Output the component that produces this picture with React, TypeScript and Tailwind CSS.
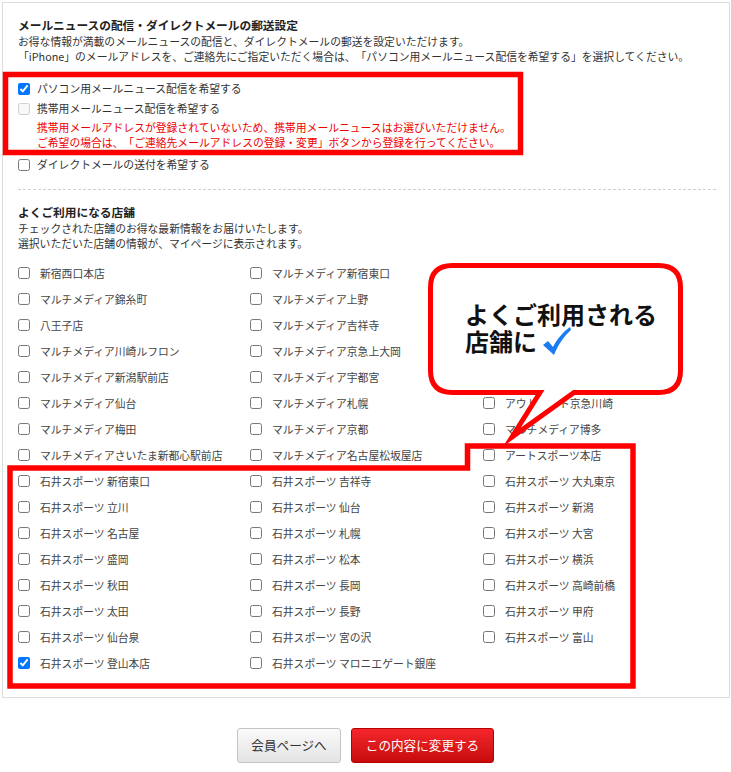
import type { JSX } from 'react';

const col1 = [
  '新宿西口本店',
  'マルチメディア錦糸町',
  '八王子店',
  'マルチメディア川崎ルフロン',
  'マルチメディア新潟駅前店',
  'マルチメディア仙台',
  'マルチメディア梅田',
  'マルチメディアさいたま新都心駅前店',
  '石井スポーツ 新宿東口',
  '石井スポーツ 立川',
  '石井スポーツ 名古屋',
  '石井スポーツ 盛岡',
  '石井スポーツ 秋田',
  '石井スポーツ 太田',
  '石井スポーツ 仙台泉',
  '石井スポーツ 登山本店',
];

const col2 = [
  'マルチメディア新宿東口',
  'マルチメディア上野',
  'マルチメディア吉祥寺',
  'マルチメディア京急上大岡',
  'マルチメディア宇都宮',
  'マルチメディア札幌',
  'マルチメディア京都',
  'マルチメディア名古屋松坂屋店',
  '石井スポーツ 吉祥寺',
  '石井スポーツ 仙台',
  '石井スポーツ 札幌',
  '石井スポーツ 松本',
  '石井スポーツ 長岡',
  '石井スポーツ 長野',
  '石井スポーツ 宮の沢',
  '石井スポーツ マロニエゲート銀座',
];

// first five rows of the third column sit under the callout
const col3 = [
  '',
  '',
  '',
  '',
  '',
  'アウトレット京急川崎',
  'マルチメディア博多',
  'アートスポーツ本店',
  '石井スポーツ 大丸東京',
  '石井スポーツ 新潟',
  '石井スポーツ 大宮',
  '石井スポーツ 横浜',
  '石井スポーツ 高崎前橋',
  '石井スポーツ 甲府',
  '石井スポーツ 富山',
  '',
];

const checkedStores = ['石井スポーツ 登山本店'];

function StoreCheck({ name }: { name: string }): JSX.Element {
  if (!name) return <div className="h-[26px]" />;
  return (
    <label className="flex h-[26px] items-center gap-[10px]">
      <input
        type="checkbox"
        defaultChecked={checkedStores.includes(name)}
        className="m-0 h-[12px] w-[12px] shrink-0"
      />
      <span className="whitespace-nowrap">{name}</span>
    </label>
  );
}

export default function App(): JSX.Element {
  const rows = col1.map((name, i) => [name, col2[i], col3[i]]);

  return (
    <div className="relative h-[772px] w-[731px] overflow-hidden bg-white font-['Noto_Sans_CJK_JP','Liberation_Sans',sans-serif] text-[#333] [text-spacing-trim:space-all]">
      <div className="ml-[2px] mt-[2px] h-[696px] w-[728px] border border-[#dcdcdc] pl-[15px] pr-[13px] pt-[13px]">
        <h2 className="text-[11.7px] font-bold leading-[18px] text-[#222]">
          メールニュースの配信・ダイレクトメールの郵送設定
        </h2>
        <p className="text-[10.8px] leading-[15px]">
          お得な情報が満載のメールニュースの配信と、ダイレクトメールの郵送を設定いただけます。
          <br />
          「iPhone」のメールアドレスを、ご連絡先にご指定いただく場合は、「パソコン用メールニュース配信を希望する」を選択してください。
        </p>

        <div className="mt-[14.5px] text-[10.8px]">
          <label className="flex h-[20px] items-center gap-[7px]">
            <input type="checkbox" defaultChecked className="m-0 h-[12px] w-[12px] shrink-0" />
            <span>パソコン用メールニュース配信を希望する</span>
          </label>
          <label className="flex h-[20px] items-center gap-[7px]">
            <input type="checkbox" disabled className="m-0 h-[12px] w-[12px] shrink-0" />
            <span>携帯用メールニュース配信を希望する</span>
          </label>
          <p className="mt-[1.5px] pl-[19px] leading-[15px] text-[#ee0000]">
            携帯用メールアドレスが登録されていないため、携帯用メールニュースはお選びいただけません。
            <br />
            ご希望の場合は、「ご連絡先メールアドレスの登録・変更」ボタンから登録を行ってください。
          </p>
          <label className="mt-[4.5px] flex h-[20px] items-center gap-[7px]">
            <input type="checkbox" className="m-0 h-[12px] w-[12px] shrink-0" />
            <span>ダイレクトメールの送付を希望する</span>
          </label>
        </div>

        <div className="mt-[14px] border-t border-dashed border-[#cfcfcf]" />

        <h2 className="mt-[13px] text-[11.7px] font-bold leading-[18px] text-[#222]">
          よくご利用になる店舗
        </h2>
        <p className="text-[10.8px] leading-[15px]">
          チェックされた店舗のお得な最新情報をお届けいたします。
          <br />
          選択いただいた店舗の情報が、マイページに表示されます。
        </p>

        <div className="mt-[9.5px] grid grid-cols-[232px_233px_232px] text-[10.8px] text-[#444]">
          {rows.map((row, i) =>
            row.map((name, j) => <StoreCheck key={`${i}-${j}`} name={name} />)
          )}
        </div>
      </div>

      <div className="mt-[30px] flex justify-center gap-[10px]">
        <button className="h-[35px] w-[104px] rounded-[3px] border border-[#c4c4c4] bg-gradient-to-b from-[#fafafa] to-[#e4e4e4] text-[12.6px] text-[#333]">
          会員ページへ
        </button>
        <button className="h-[35px] w-[143px] rounded-[3px] border border-[#b80000] bg-gradient-to-b from-[#f4262b] to-[#c70a0a] text-[12.6px] text-white">
          この内容に変更する
        </button>
      </div>

      {/* annotation overlay */}
      <svg
        className="pointer-events-none absolute left-0 top-0"
        width="731"
        height="772"
        viewBox="0 0 731 772"
      >
        <rect x="5.5" y="74.5" width="515" height="78" fill="none" stroke="#ff0000" strokeWidth="5.5" />
        <path
          d="M10 468 H467.5 V446 H633 V686 H10 Z"
          fill="none"
          stroke="#ff0000"
          strokeWidth="5.5"
        />
        <path
          d="M452.5 265.5 H658.5 Q680.5 265.5 680.5 287.5 V370.5 Q680.5 392.5 658.5 392.5 H574 L512 437 L540 392.5 H452.5 Q430.5 392.5 430.5 370.5 V287.5 Q430.5 265.5 452.5 265.5 Z"
          fill="#ffffff"
          stroke="#ff0000"
          strokeWidth="5"
          strokeLinejoin="miter"
          strokeMiterlimit="10"
        />
      </svg>
      <div className="absolute left-[465px] top-[299.5px] whitespace-nowrap text-[24px] font-bold leading-[27px] text-[#111]">
        <div>よくご利用される</div>
        <div className="flex items-center">
          <span>店舗に</span>
          <svg className="ml-[6px]" width="28" height="28" viewBox="0 0 28 28">
            <path
              d="M0 18 L5 14 L10 20 C14 12 20 5 27 0 L28 3 C21 9 15 18 11 28 Z"
              fill="#1a7cf0"
            />
          </svg>
        </div>
      </div>
    </div>
  );
}
